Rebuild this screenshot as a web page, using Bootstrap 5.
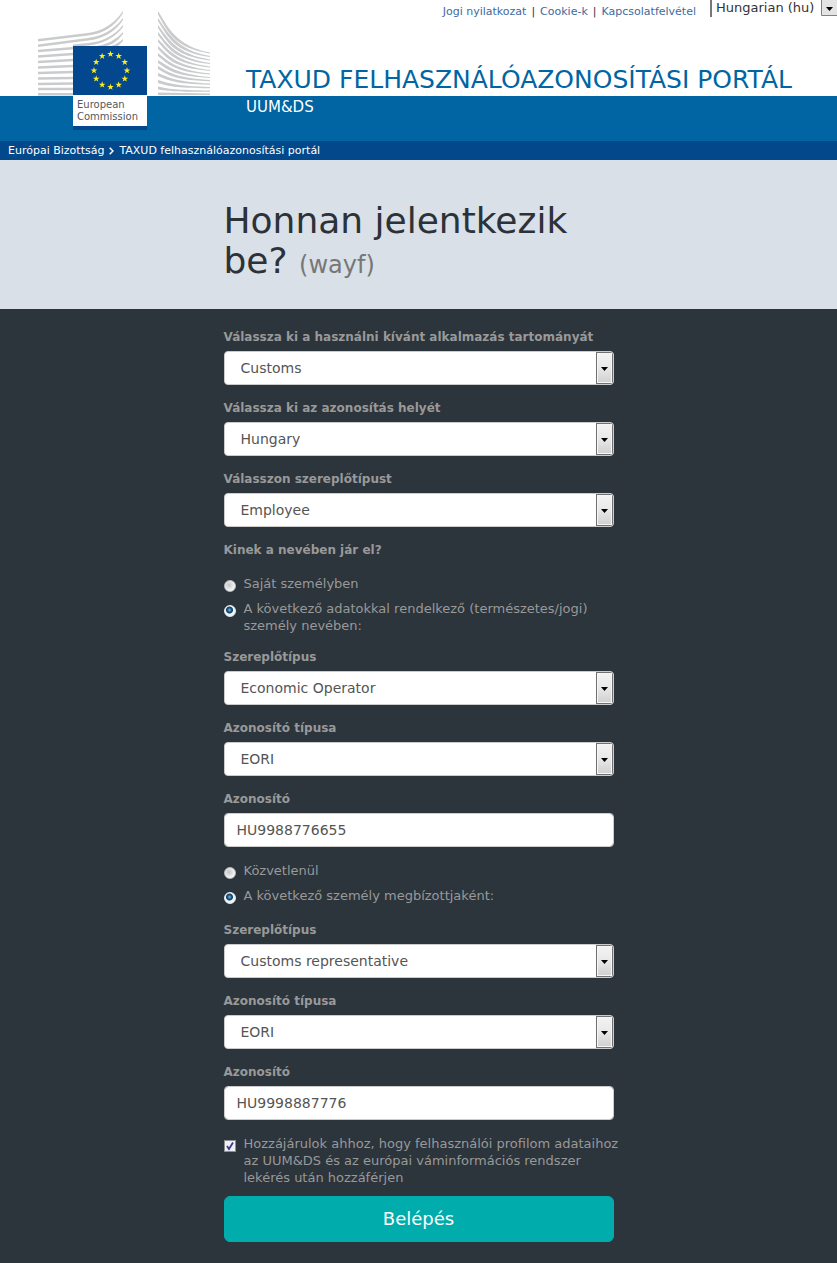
<!DOCTYPE html>
<html lang="hu">
<head>
<meta charset="utf-8">
<meta name="viewport" content="width=device-width, initial-scale=1">
<title>TAXUD felhasználóazonosítási portál</title>
<link rel="stylesheet" href="https://cdn.jsdelivr.net/npm/bootstrap@5.3.0/dist/css/bootstrap.min.css">
<style>
  body { font-family: Verdana, "DejaVu Sans", sans-serif; font-size: 13px; line-height: 17px; background: #2c343c; color: #999; }
  .site-header { background: linear-gradient(#fff 96px, #0065a2 96px); min-height: 141px; padding-left: 38px; gap: 36px; }
  .ec-logo { width: 172px; height: 130px; }
  .top-links { font-size: 11px; height: 22px; }
  .top-links a { color: #3e6a9e; text-decoration: none; }
  .top-links nav { color: #333; margin-right: 14px; padding-top: 3px; display: flex; gap: 5px; }
  .lang-select { appearance: none; border: 0; border-left: 2px solid #777; border-radius: 0; font-size: 13px; color: #333; width: 127px; height: 17px; padding: 0 0 2px 4px; line-height: 15px;
    background: #fff url("data:image/svg+xml,%3Csvg xmlns='http://www.w3.org/2000/svg' width='16' height='17'%3E%3Cpath d='M.5-1V15.500H17V-1z' fill='%23e4e4e4' stroke='%23808080'/%3E%3Cpath d='M5 7h7l-3.500 4z' fill='%23000'/%3E%3C/svg%3E") right top no-repeat; }
  .portal-title { font-size: 25px; line-height: 30px; color: #0065a2; margin-top: 43px; }
  .portal-sub { font-size: 15px; line-height: 24px; color: #fff; }
  .crumbs { background: #03488a; font-size: 11px; line-height: 19px; padding-left: 8px; color: #fff; }
  .crumbs a { color: #fff; text-decoration: none; }
  .crumbs svg { width: 5px; height: 8px; margin: 0 5px; }
  .hero { background: #d9e0e8; padding: 41px 0 28px; }
  .hero h1 { font-size: 36px; line-height: 40px; color: #2d3238; }
  .hero h1 small { font-size: 24px; line-height: 24px; color: #777; }
  .page-width { max-width: 780px; }
  .login-form { padding: 20px 0; }
  .field { margin-bottom: 15px; }
  .field-label { display: block; font-size: 12px; line-height: 17px; font-weight: 700; margin: 0 0 5px; }
  .login-form .form-select, .login-form .form-control { height: 34px; font-size: 14px; line-height: 20px; color: #555; border: 1px solid #ccc; border-radius: 4px; padding: 6px 12px; background-color: #fff; }
  .login-form .form-select { padding-left: 16px;
    background-image: url("data:image/svg+xml,%3Csvg xmlns='http://www.w3.org/2000/svg' width='17' height='32'%3E%3Cdefs%3E%3ClinearGradient id='g' x2='0' y2='1'%3E%3Cstop stop-color='%23f4f4f4'/%3E%3Cstop offset='.5' stop-color='%23e8e8e8'/%3E%3Cstop offset='1' stop-color='%23cfcfcf'/%3E%3C/linearGradient%3E%3C/defs%3E%3Crect x='.5' y='.5' width='16' height='31' fill='url(%23g)' stroke='%23707070'/%3E%3Crect x='1.5' y='1.5' width='14' height='29' fill='none' stroke='%23f6f6f6'/%3E%3Cpath d='M5 15h7l-3.500 4z' fill='%23000'/%3E%3C/svg%3E");
    background-size: 17px 32px; background-position: right top; }
  .choice { display: flex; align-items: flex-start; gap: 8px; }
  .choice + .choice { margin-top: 8px; }
  .choice input { appearance: none; flex: none; width: 12px; height: 12px; margin: 5px 0 0; }
  .choice input[type=radio] { border-radius: 50%; border: 1px solid #b9bdc0; background: radial-gradient(circle at 40% 40%, #c4c4c4, #f4f4f4 65%); }
  .choice input[type=radio]:checked { border-color: #e4eef4; background: radial-gradient(circle at 45% 40%, #6fc0e8 0, #1c5a8c 2px, #123a5e 3px, #eef4f8 4px); }
  .choice input[type=checkbox] { border: 1px solid #8e8f8f;
    background: #f0f0f6 url("data:image/svg+xml,%3Csvg xmlns='http://www.w3.org/2000/svg' viewBox='0 0 10 10'%3E%3Cpath d='M2 5l2 3 4-6.500' fill='none' stroke='%233c3c94' stroke-width='1.800'/%3E%3C/svg%3E") center/10px no-repeat; }
  .consent { margin-right: -8px; }
  .radio-group { margin-bottom: 18px; }
  .btn-enter { background: #00acac; color: #fff; font-size: 18px; line-height: 24px; border: 1px solid #00acac; border-radius: 6px; padding: 10px 16px; margin-top: 10px; }
  .btn-enter:hover { background: #008a8a; color: #fff; }
</style>
</head>
<body>
<header class="site-header d-flex">
  <svg class="ec-logo flex-shrink-0" viewBox="38 0 172 130" role="img" aria-label="European Commission">
    <g fill="none" stroke="#c9cbcc" stroke-width="2.600">
      <path d="M38 56.500L73 54M38 62L73 60M38 67.500L73 66M38 73L73 72M38 78.500L73 78M38 84L73 83.500M38 89L73 89M38 94.200H73M38 51L75 48"/>
    </g>
    <g fill="#c9cbcc">
      <path d="M38 39L88 33Q110 30 123 11V13Q111 33 88 35.500L38 41.500z"/>
      <path d="M38 44.500L88 38Q110 35 123 18V20Q111 38 88 40.500L38 47z"/>
      <path d="M73 44.500L88 43Q110 41 123 25V27Q111 43 88 45.500L73 47z"/>
      <path d="M94 46.500Q113 44 123 32V34Q115 45 103 47z"/>
      <path d="M108 47Q118 44 123 39V41L117 47z"/>
      <path d="M158 11C168 27 176 46 210 52.500V53.500C174 48 168 32 158 14.500z"/>
      <path d="M158 18C168 32 176 50 210 56V57C174 52 168 37 158 21z"/>
      <path d="M158 25C168 38 176 54 210 59.500V60.500C174 56 168 43 158 28z"/>
      <path d="M158 32C168 44 176 58 210 63V64C174 60 168 48 158 35z"/>
      <path d="M158 39C168 49 176 62 210 66.500V67.500C174 64 168 53 158 42z"/>
      <path d="M158 46C168 55 176 66 210 70V71C174 68 168 59 158 49z"/>
      <path d="M158 53C168 61 176 70 210 73.500V74.500C174 72 168 64 158 56z"/>
      <path d="M158 60C168 66 176 74 210 77V78C174 76 168 70 158 63z"/>
      <path d="M158 66C168 72 176 78 210 80V81.200C174 80 168 75 158 69z"/>
      <path d="M158 73C168 77 176 82 210 83.500V84.700C174 84 168 80 158 76z"/>
      <path d="M158 80C168 83 176 86 210 87V88.200C174 88 168 86 158 83z"/>
      <path d="M158 86.500C168 89 176 90 210 90.500V91.700C174 92 168 91 158 89.500z"/>
      <path d="M158 92.500L210 93.500V95H158z"/>
    </g>
    <path fill="#fff" d="M73 95h74v31H73z"/>
    <path fill="#03488f" d="M73 46h74v49H73zM73 126h74v4H73z"/>
    <defs><path id="star" d="M0-3.500L.8-1.100H3.300L1.300.4 2.100 2.800 0 1.400-2.100 2.800-1.300.4-3.300-1.100H-.8z"/></defs>
    <g fill="#ffec1a">
      <use href="#star" x="110.500" y="54"/><use href="#star" x="118.700" y="56.200"/><use href="#star" x="124.800" y="62.200"/>
      <use href="#star" x="127" y="70.500"/><use href="#star" x="124.800" y="78.800"/><use href="#star" x="118.700" y="84.800"/>
      <use href="#star" x="110.500" y="87"/><use href="#star" x="102.200" y="84.800"/><use href="#star" x="96.200" y="78.800"/>
      <use href="#star" x="94" y="70.500"/><use href="#star" x="96.200" y="62.200"/><use href="#star" x="102.200" y="56.200"/>
    </g>
    <g fill="#55585c" font-family="'DejaVu Sans', sans-serif" font-size="10">
      <text x="77" y="108">European</text><text x="77" y="120">Commission</text>
    </g>
  </svg>
  <div class="flex-grow-1">
    <div class="top-links d-flex justify-content-end">
      <nav><a href="#">Jogi nyilatkozat</a><span>|</span><a href="#">Cookie-k</a><span>|</span><a href="#">Kapcsolatfelvétel</a></nav>
      <select class="lang-select" aria-label="Nyelv"><option>Hungarian (hu)</option></select>
    </div>
    <div class="portal-title text-nowrap">TAXUD FELHASZNÁLÓAZONOSÍTÁSI PORTÁL</div>
    <div class="portal-sub">UUM&amp;DS</div>
  </div>
</header>
<nav class="crumbs d-flex align-items-center">
  <a href="#">Európai Bizottság</a>
  <svg viewBox="0 0 5 8" aria-hidden="true"><path d="M.7.700L4 4 .7 7.300" fill="none" stroke="#fff" stroke-width="1.500"/></svg>
  <a href="#">TAXUD felhasználóazonosítási portál</a>
</nav>
<section class="hero">
  <div class="container-fluid page-width"><div class="row"><div class="col-6 mx-auto px-0">
    <h1 class="m-0 fw-normal">Honnan jelentkezik be? <small>(wayf)</small></h1>
  </div></div></div>
</section>
<main class="container-fluid page-width">
  <div class="row">
    <form class="login-form col-6 mx-auto">
      <div class="field">
        <label class="field-label" for="domain">Válassza ki a használni kívánt alkalmazás tartományát</label>
        <select class="form-select" id="domain"><option>Customs</option></select>
      </div>
      <div class="field">
        <label class="field-label" for="place">Válassza ki az azonosítás helyét</label>
        <select class="form-select" id="place"><option>Hungary</option></select>
      </div>
      <div class="field">
        <label class="field-label" for="actor">Válasszon szereplőtípust</label>
        <select class="form-select" id="actor"><option>Employee</option></select>
      </div>
      <fieldset class="field">
        <legend class="field-label mb-3">Kinek a nevében jár el?</legend>
        <div class="choice"><input type="radio" name="behalf" id="self"><label for="self">Saját személyben</label></div>
        <div class="choice"><input type="radio" name="behalf" id="other" checked><label for="other">A következő adatokkal rendelkező (természetes/jogi) személy nevében:</label></div>
      </fieldset>
      <div class="field">
        <label class="field-label" for="type1">Szereplőtípus</label>
        <select class="form-select" id="type1"><option>Economic Operator</option></select>
      </div>
      <div class="field">
        <label class="field-label" for="idtype1">Azonosító típusa</label>
        <select class="form-select" id="idtype1"><option>EORI</option></select>
      </div>
      <div class="field">
        <label class="field-label" for="id1">Azonosító</label>
        <input class="form-control" id="id1" type="text" value="HU9988776655">
      </div>
      <div class="radio-group">
        <div class="choice"><input type="radio" name="via" id="direct"><label for="direct">Közvetlenül</label></div>
        <div class="choice"><input type="radio" name="via" id="agent" checked><label for="agent">A következő személy megbízottjaként:</label></div>
      </div>
      <div class="field">
        <label class="field-label" for="type2">Szereplőtípus</label>
        <select class="form-select" id="type2"><option>Customs representative</option></select>
      </div>
      <div class="field">
        <label class="field-label" for="idtype2">Azonosító típusa</label>
        <select class="form-select" id="idtype2"><option>EORI</option></select>
      </div>
      <div class="field">
        <label class="field-label" for="id2">Azonosító</label>
        <input class="form-control" id="id2" type="text" value="HU9998887776">
      </div>
      <div class="choice consent"><input type="checkbox" id="consent" checked><label for="consent">Hozzájárulok ahhoz, hogy felhasználói profilom adataihoz az UUM&amp;DS és az európai váminformációs rendszer lekérés után hozzáférjen</label></div>
      <button class="btn btn-enter w-100" type="submit">Belépés</button>
    </form>
  </div>
</main>
<script src="https://cdn.jsdelivr.net/npm/bootstrap@5.3.0/dist/js/bootstrap.bundle.min.js"></script>
</body>
</html>
